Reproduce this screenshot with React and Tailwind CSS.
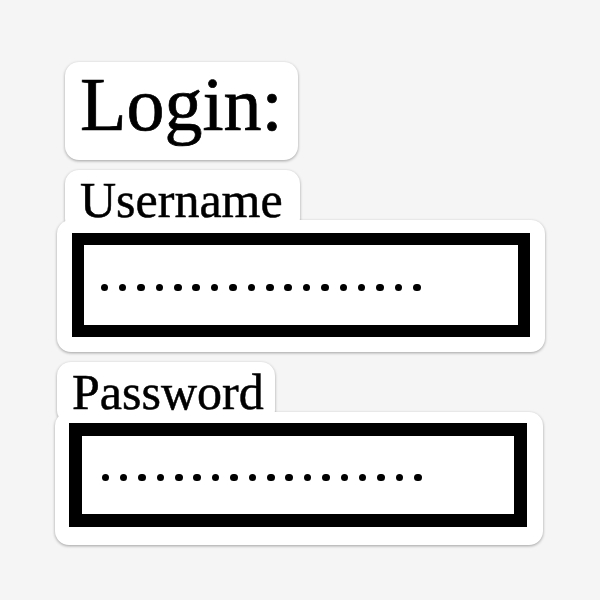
import React from "react";

const serif = { fontFamily: '"Liberation Serif", "DejaVu Serif", serif' };

function Dots({ pl }) {
  const dots = Array.from({ length: 18 });
  return (
    <div className={`flex h-full items-center gap-[10.9px] pt-[5px] ${pl}`}>
      {dots.map((_, i) => (
        <span key={i} className="block h-[7.5px] w-[7.5px] shrink-0 rounded-full bg-black" />
      ))}
    </div>
  );
}

export default function App() {
  return (
    <div
      className="flex h-[600px] w-[600px] flex-col bg-[#f5f5f5] pl-[55px] pt-[62px] text-black"
      style={serif}
    >
      {/* Login */}
      <div className="ml-[10px] drop-shadow-[0_1px_1.5px_rgba(0,0,0,0.35)]">
        <div className="h-[98px] w-[233px] rounded-[14px] bg-white pl-[15px] pt-[4px]">
          <div className="text-[76px] leading-none [-webkit-text-stroke:0.7px_black]">Login:</div>
        </div>
      </div>

      {/* Username */}
      <div className="mt-[10px] flex flex-col items-start drop-shadow-[0_1px_1.5px_rgba(0,0,0,0.35)]">
        <div className="ml-[10px] h-[62px] w-[235px] rounded-[14px] bg-white pl-[15px] pt-[5px]">
          <div className="text-[50px] leading-none [-webkit-text-stroke:0.5px_black]">Username</div>
        </div>
        <div className="-mt-[12px] ml-[2px] h-[132px] w-[488px] rounded-[14px] bg-white pl-[15px] pt-[13px]">
          <div className="h-[104px] w-[458px] border-[12.5px] border-black bg-white">
            <Dots pl="pl-[16.5px]" />
          </div>
        </div>
      </div>

      {/* Password */}
      <div className="mt-[10px] flex flex-col items-start drop-shadow-[0_1px_1.5px_rgba(0,0,0,0.35)]">
        <div className="ml-[2px] h-[62px] w-[218px] rounded-[14px] bg-white pl-[15px] pt-[5px]">
          <div className="text-[50px] leading-none [-webkit-text-stroke:0.5px_black]">Password</div>
        </div>
        <div className="-mt-[12px] h-[133px] w-[488px] rounded-[14px] bg-white pl-[14px] pt-[11px]">
          <div className="h-[104px] w-[458px] border-[13px] border-black bg-white">
            <Dots pl="pl-[19.5px]" />
          </div>
        </div>
      </div>
    </div>
  );
}
